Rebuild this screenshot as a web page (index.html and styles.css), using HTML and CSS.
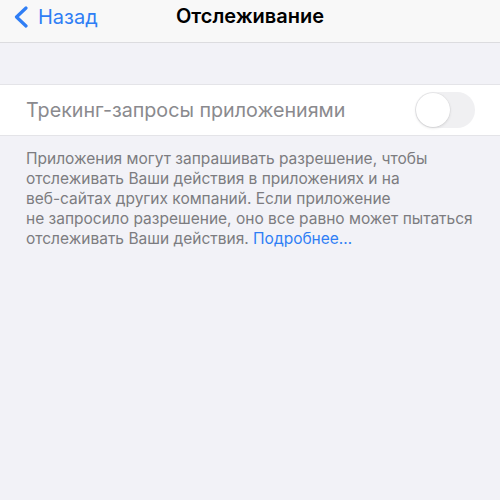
FILE: index.html
```html
<!DOCTYPE html>
<html lang="ru">
<head>
<meta charset="utf-8">
<link rel="stylesheet" href="styles.css">
</head>
<body>
<header class="nav">
  <a class="back">
    <svg class="chev" width="16" height="22" viewBox="0 0 16 22"><path d="M13 2 L3.5 11 L13 20" fill="none" stroke="#2f7ef5" stroke-width="3.2" stroke-linecap="round" stroke-linejoin="round"/></svg>
    <span>Назад</span>
  </a>
  <h1 class="title">Отслеживание</h1>
</header>
<main class="content">
  <div class="cell">
    <span class="cell-label">Трекинг-запросы приложениями</span>
    <span class="toggle"><span class="knob"></span></span>
  </div>
  <p class="footer">Приложения могут запрашивать разрешение, чтобы<br>отслеживать Ваши действия в приложениях и на<br>веб-сайтах других компаний. Если приложение<br>не запросило разрешение, оно все равно может пытаться<br>отслеживать Ваши действия. <a class="link">Подробнее…</a></p>
</main>
</body>
</html>
```
FILE: styles.css
```css
* { box-sizing: border-box; }
html, body { margin: 0; padding: 0; }
body {
  width: 500px;
  height: 500px;
  background: #f2f2f7;
  font-family: Inter, "Noto Sans", sans-serif;
  overflow: hidden;
}
.nav {
  height: 43px;
  background: #f8f8f8;
  border-bottom: 1px solid #dcdcdf;
  display: flex;
  align-items: center;
  justify-content: center;
  position: relative;
}
.back {
  position: absolute;
  left: 13px;
  top: 5px;
  display: flex;
  align-items: center;
  gap: 9px;
  color: #2f7ef5;
  font-size: 20px;
  line-height: 24px;
}
.chev { display: block; }
.title {
  margin: 0;
  font-size: 20px;
  font-weight: 600;
  color: #000;
  line-height: 24px;
  margin-top: -10px;
}
.content { padding-top: 41px; }
.cell {
  height: 52px;
  background: #fff;
  border-top: 1px solid #e4e4e8;
  border-bottom: 1px solid #e4e4e8;
  display: flex;
  align-items: center;
  justify-content: space-between;
  padding: 0 25px 0 26px;
}
.cell-label {
  font-size: 19.7px;
  color: #8a8a8e;
}
.toggle {
  width: 60px;
  height: 36px;
  border-radius: 18px;
  background: #f0f0f2;
  display: flex;
  align-items: center;
  padding: 1px;
}
.knob {
  width: 34px;
  height: 34px;
  border-radius: 50%;
  background: #fff;
  box-shadow: 0 1px 3px rgba(0,0,0,0.12), 0 0 0 0.5px rgba(0,0,0,0.05);
}
.footer {
  margin: 13px 0 0 0;
  padding: 0 0 0 26px;
  font-size: 15.5px;
  line-height: 20px;
  color: #7c7c80;
  white-space: nowrap;
}
.link { color: #2f7ef5; }
```
